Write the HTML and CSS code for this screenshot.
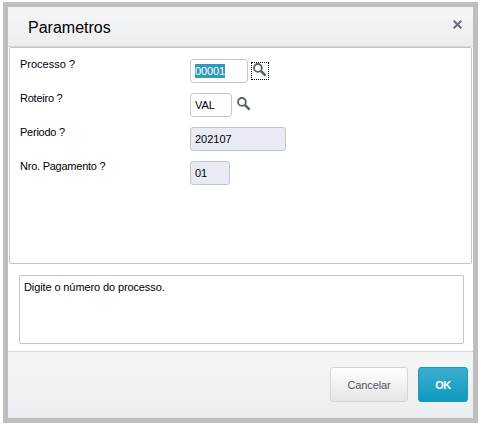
FILE: index.html
```html
<!DOCTYPE html>
<html lang="pt-BR">
<head>
<meta charset="utf-8">
<title>Parametros</title>
<link rel="stylesheet" href="styles.css">
</head>
<body>
<main class="dialog">
  <header class="header">
    <h1 class="title">Parametros</h1>
    <svg class="close" width="9" height="9" viewBox="0 0 9 9"><path d="M.7 .7l7.6 7.6M8.3 .7L.7 8.3"/></svg>
  </header>
  <section class="panel">
    <div class="row">
      <span class="label">Processo ?</span>
      <div class="field w58"><span class="selected">00001</span></div>
      <span class="lookup focused"><svg width="14" height="14" viewBox="0 0 14 14"><circle cx="4.9" cy="4.9" r="3.9"/><path d="M7.8 7.8l4.8 4.8"/></svg></span>
    </div>
    <div class="row">
      <span class="label tight">Roteiro ?</span>
      <div class="field w42">VAL</div>
      <span class="lookup"><svg width="14" height="14" viewBox="0 0 14 14"><circle cx="4.9" cy="4.9" r="3.9"/><path d="M7.8 7.8l4.8 4.8"/></svg></span>
    </div>
    <div class="row">
      <span class="label tight">Periodo ?</span>
      <div class="field readonly w96">202107</div>
    </div>
    <div class="row">
      <span class="label tight">Nro. Pagamento ?</span>
      <div class="field readonly w40">01</div>
    </div>
  </section>
  <section class="message">Digite o número do processo.</section>
  <footer class="footer">
    <button class="button cancel">Cancelar</button>
    <button class="button ok">OK</button>
  </footer>
</main>
</body>
</html>
```

FILE: styles.css
```css
* { box-sizing: border-box; }
body {
  margin: 0;
  padding: 2px 3px;
  background: #fff;
  font: 11px/14px "Liberation Sans", Arial, sans-serif;
  color: #000;
}
.dialog {
  display: flex;
  flex-direction: column;
  width: 475px;
  height: 421px;
  border: 5px solid #bebebe;
  background: #fff;
}
.header {
  display: flex;
  justify-content: space-between;
  height: 40px;
  padding: 0 11px 0 20px;
  border-bottom: 1px solid #d5d7d8;
  background: linear-gradient(#f4f6f6, #ecedf0);
}
.title {
  margin: 11px 0 0;
  font-size: 16px;
  line-height: 20px;
  font-weight: 400;
}
.close {
  margin-top: 13px;
  fill: none;
  stroke: #657080;
  stroke-width: 2;
}
.panel {
  height: 217px;
  margin: 0 1px;
  padding: 11px 10px 0;
  border: 1px solid #c3c3c5;
  border-radius: 2px;
}
.row {
  display: flex;
  height: 34px;
}
.label {
  width: 170px;
  margin-top: -2px;
}
.tight { letter-spacing: -0.24px; }
.field {
  height: 24px;
  padding: 4px;
  border: 1px solid #c3c6c9;
  border-radius: 3px;
  background: #fff;
}
.readonly { background: #e8ebf3; }
.w58 { width: 58px; }
.w42 { width: 42px; }
.w96 { width: 96px; }
.w40 { width: 40px; }
.selected {
  display: inline-block;
  width: 30px;
  background: #3399b8;
  color: #fff;
  letter-spacing: -0.1px;
}
.lookup {
  width: 18px;
  height: 18px;
  margin: 3px 0 0 3px;
  padding: 2px;
}
.lookup svg {
  display: block;
  margin-top: -1px;
  fill: none;
  stroke: #526071;
  stroke-width: 1.8;
}
.lookup path { stroke-width: 2.6; }
.focused { border: 1px dotted #000; padding: 1px; }
.message {
  height: 69px;
  margin: 11px 9px 0 11px;
  padding: 4px;
  border: 1px solid #c3c5c7;
  border-radius: 2px;
  letter-spacing: -0.11px;
}
.footer {
  display: flex;
  justify-content: flex-end;
  gap: 10px;
  height: 67px;
  margin-top: auto;
  padding: 15px 5px 0;
  border-top: 1px solid #d4d8d8;
  background: linear-gradient(#f4f6f6, #ecedf0);
}
.button {
  height: 35px;
  padding: 0;
  border: 1px solid #d3d5d6;
  border-radius: 3px;
  font: 11px/14px "Liberation Sans", Arial, sans-serif;
  letter-spacing: -0.15px;
}
.cancel {
  width: 78px;
  background: linear-gradient(#fff, #e5e5e5);
  color: #505563;
}
.ok {
  width: 50px;
  border-color: #2399b9;
  background: linear-gradient(#3baece, #0e9bc0);
  color: #fff;
  font-weight: 700;
  letter-spacing: -0.6px;
}
```
